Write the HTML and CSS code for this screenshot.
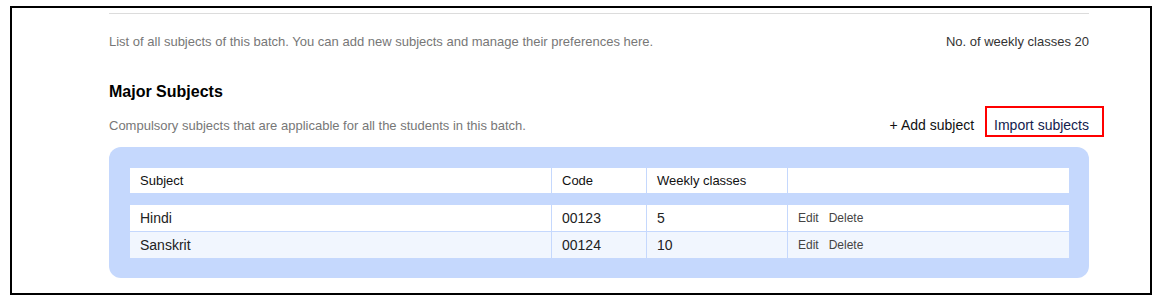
FILE: index.html
```html
<!DOCTYPE html>
<html lang="en">
<head>
<meta charset="utf-8">
<title>Subjects</title>
<link rel="stylesheet" href="styles.css">
</head>
<body>
<div class="frame">
  <div class="rule"></div>
  <div class="intro">
    <p class="muted">List of all subjects of this batch. You can add new subjects and manage their preferences here.</p>
    <p class="count">No. of weekly classes 20</p>
  </div>
  <h2 class="title">Major Subjects</h2>
  <div class="subhead">
    <p class="muted">Compulsory subjects that are applicable for all the students in this batch.</p>
    <div class="actions">
      <span class="add">+ Add subject</span>
      <span class="import">Import subjects</span>
    </div>
  </div>
  <div class="panel">
    <table class="subjects">
      <colgroup>
        <col class="c1"><col class="c2"><col class="c3"><col class="c4">
      </colgroup>
      <thead>
        <tr><th>Subject</th><th>Code</th><th>Weekly classes</th><th></th></tr>
      </thead>
      <tbody>
        <tr class="first"><td>Hindi</td><td>00123</td><td>5</td><td class="ops"><span>Edit</span><span>Delete</span></td></tr>
        <tr class="alt"><td>Sanskrit</td><td>00124</td><td>10</td><td class="ops"><span>Edit</span><span>Delete</span></td></tr>
      </tbody>
    </table>
  </div>
</div>
</body>
</html>
```

FILE: styles.css
```css
* { box-sizing: border-box; }
html, body { margin: 0; padding: 0; background: #fff; }
body { font-family: "Liberation Sans", Arial, sans-serif; color: #222; }

.frame {
  margin: 6px 0 0 10px;
  width: 1142px;
  height: 289px;
  border: 2px solid #000;
  padding: 5px 61px 0 97px;
}

.rule { border-top: 1px solid #dcdcdc; height: 0; }

p { margin: 0; }

.intro {
  display: flex;
  justify-content: space-between;
  align-items: baseline;
  margin-top: 20px;
  font-size: 13px;
  line-height: 16px;
}
.muted { color: #777; font-size: 13px; line-height: 16px; }
.count { color: #333; }

.title {
  margin: 32px 0 0;
  font-size: 16px;
  line-height: 20px;
  font-weight: bold;
  color: #000;
}

.subhead {
  display: flex;
  justify-content: space-between;
  align-items: baseline;
  margin-top: 4px;
}
.actions { display: flex; align-items: baseline; margin-right: -15px; }
.add { font-size: 14px; line-height: 16px; color: #111; margin-right: 11px; }
.import {
  font-size: 14px;
  line-height: 16px;
  color: #13214d;
  border: 2px solid #f00;
  padding: 9px 13px 2px 7px;
}

.panel {
  margin-top: 10px;
  background: #c5d8fd;
  border-radius: 12px;
  padding: 21px 20px 20px 21px;
}

.subjects {
  width: 100%;
  border-collapse: separate;
  border-spacing: 0;
  table-layout: fixed;
}
.c1 { width: 421px; }
.c2 { width: 95px; }
.c3 { width: 141px; }

.subjects th, .subjects td {
  background: #fff;
  text-align: left;
  padding: 0 0 0 10px;
  border-left: 1px solid #c5d8fd;
  color: #222;
  vertical-align: middle;
}
.subjects th:first-child, .subjects td:first-child { border-left: none; }
.subjects th {
  height: 25px;
  font-size: 13px;
  font-weight: normal;
  color: #111;
}
.subjects td { font-size: 14px; }
.subjects tr.first td { border-top: 12px solid #c5d8fd; height: 38px; }
.subjects tr.alt td { background: #f1f6fe; border-top: 1px solid #c5d8fd; height: 27px; }
.subjects td.ops { font-size: 12px; color: #444; }
.ops span { margin-right: 10px; }
```
